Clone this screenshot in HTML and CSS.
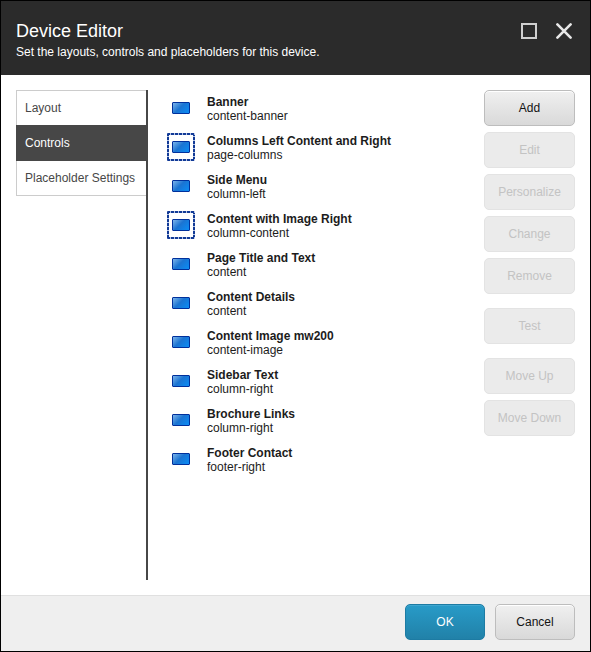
FILE: index.html
```html
<!DOCTYPE html>
<html lang="en">
<head>
<meta charset="utf-8">
<title>Device Editor</title>
<link rel="stylesheet" href="styles.css">
</head>
<body>
<main class="dialog">
  <header class="header">
    <div class="heading">
      <h1 class="title">Device Editor</h1>
      <p class="subtitle">Set the layouts, controls and placeholders for this device.</p>
    </div>
    <div class="window-actions">
      <button class="window-button" type="button" aria-label="Maximize">
        <svg width="16" height="16" viewBox="0 0 16 16"><rect x="1" y="1" width="14" height="14" fill="none" stroke="#d0d0d0" stroke-width="2"/></svg>
      </button>
      <button class="window-button" type="button" aria-label="Close">
        <svg width="16" height="16" viewBox="0 0 16 16"><path d="M1.4 1.4 14.6 14.6M14.6 1.4 1.4 14.6" fill="none" stroke="#e8e8e8" stroke-width="2.6" stroke-linecap="round"/></svg>
      </button>
    </div>
  </header>

  <div class="content">
    <nav class="tabs">
      <a class="tab" href="#layout">Layout</a>
      <a class="tab tab-active" href="#controls" aria-current="page">Controls</a>
      <a class="tab" href="#placeholders">Placeholder Settings</a>
    </nav>

    <ul class="controls">
      <li class="control"><span class="frame"><span class="icon"></span></span><div><strong>Banner</strong><p>content-banner</p></div></li>
      <li class="control"><span class="frame frame-dashed"><span class="icon"></span></span><div><strong>Columns Left Content and Right</strong><p>page-columns</p></div></li>
      <li class="control"><span class="frame"><span class="icon"></span></span><div><strong>Side Menu</strong><p>column-left</p></div></li>
      <li class="control"><span class="frame frame-dashed"><span class="icon"></span></span><div><strong>Content with Image Right</strong><p>column-content</p></div></li>
      <li class="control"><span class="frame"><span class="icon"></span></span><div><strong>Page Title and Text</strong><p>content</p></div></li>
      <li class="control"><span class="frame"><span class="icon"></span></span><div><strong>Content Details</strong><p>content</p></div></li>
      <li class="control"><span class="frame"><span class="icon"></span></span><div><strong>Content Image mw200</strong><p>content-image</p></div></li>
      <li class="control"><span class="frame"><span class="icon"></span></span><div><strong>Sidebar Text</strong><p>column-right</p></div></li>
      <li class="control"><span class="frame"><span class="icon"></span></span><div><strong>Brochure Links</strong><p>column-right</p></div></li>
      <li class="control"><span class="frame"><span class="icon"></span></span><div><strong>Footer Contact</strong><p>footer-right</p></div></li>
    </ul>

    <div class="actions">
      <div class="action-group">
        <button class="button" type="button">Add</button>
        <button class="button" type="button" disabled>Edit</button>
        <button class="button" type="button" disabled>Personalize</button>
        <button class="button" type="button" disabled>Change</button>
        <button class="button" type="button" disabled>Remove</button>
      </div>
      <div class="action-group">
        <button class="button" type="button" disabled>Test</button>
      </div>
      <div class="action-group">
        <button class="button" type="button" disabled>Move Up</button>
        <button class="button" type="button" disabled>Move Down</button>
      </div>
    </div>
  </div>

  <footer class="footer">
    <button class="button button-primary" type="button">OK</button>
    <button class="button" type="button">Cancel</button>
  </footer>
</main>
</body>
</html>
```
FILE: styles.css
```css
* {
  box-sizing: border-box;
}

body {
  margin: 0;
  font: 12px/14px Arial, "Liberation Sans", sans-serif;
  color: #1c1c1c;
}

h1,
p,
ul {
  margin: 0;
  padding: 0;
}

.dialog {
  display: flex;
  flex-direction: column;
  min-height: 100vh;
  border: 1px solid #000;
  background: #fff;
}

.header {
  display: flex;
  justify-content: space-between;
  padding: 19px 18px 13px 15px;
  background: #2b2b2b;
  color: #fff;
}

.title {
  font-size: 18px;
  line-height: 22px;
  font-weight: 400;
}

.subtitle {
  line-height: 20px;
}

.window-actions {
  display: flex;
  align-items: flex-start;
  gap: 19px;
  padding-top: 3px;
}

.window-button {
  display: block;
  padding: 0;
  border: 0;
  background: none;
}

.window-button svg {
  display: block;
}

.content {
  display: flex;
  flex: 1;
  padding: 15px;
}

.tabs {
  width: 132px;
  flex: none;
  border-right: 2px solid #474747;
}

.tab {
  display: block;
  padding: 10px 0 10px 8px;
  border: 1px solid #ccc;
  border-width: 1px 0 0 1px;
  color: #474747;
  text-decoration: none;
  white-space: nowrap;
}

.tab:last-child {
  border-bottom-width: 1px;
}

.tab-active {
  padding-bottom: 11px;
  border-color: #474747;
  background: #474747;
  color: #fff;
}

.tab-active + .tab {
  border-top: 0;
}

.controls {
  flex: 1;
  padding: 4px 0 0 19px;
  list-style: none;
}

.control {
  display: flex;
  gap: 12px;
  margin-bottom: 11px;
}

.control div {
  padding-top: 1px;
  margin-bottom: -1px;
}

.control strong {
  display: block;
}

.frame {
  display: flex;
  align-items: center;
  justify-content: center;
  width: 28px;
  height: 28px;
}

/* Tight dashes: 3px on, 1px off, 2px thick on each side */
.frame-dashed {
  --across: repeating-linear-gradient(90deg, #123a96 0 3px, #b4c4e6 3px 4px);
  --down: repeating-linear-gradient(180deg, #123a96 0 3px, #b4c4e6 3px 4px);
  border-radius: 1px;
  background:
    var(--across) top / 100% 2px no-repeat,
    var(--across) bottom / 100% 2px no-repeat,
    var(--down) left / 2px 100% no-repeat,
    var(--down) right / 2px 100% no-repeat;
}

.icon {
  width: 18px;
  height: 12px;
  border: 1px solid #00309c;
  border-radius: 1px;
  background: linear-gradient(135deg, #7db4ea 0%, #1b74d2 45%, #0a8cf5 100%);
}

.actions {
  display: flex;
  flex-direction: column;
  gap: 14px;
  width: 91px;
}

.action-group {
  display: flex;
  flex-direction: column;
  gap: 6px;
}

.button {
  height: 36px;
  padding: 0;
  border: 1px solid #bdbdbd;
  border-radius: 5px;
  background: linear-gradient(#f0f0f0, #d9d9d9);
  box-shadow: inset 0 1px #fff;
  color: #131313;
  font: inherit;
}

.button:disabled {
  border-color: #e3e3e3;
  background: #ebebeb;
  box-shadow: none;
  color: #c3c3c3;
}

.footer {
  display: flex;
  justify-content: flex-end;
  gap: 10px;
  padding: 8px 15px 11px;
  border-top: 1px solid #e0e0e0;
  background: #efefef;
}

.footer .button {
  width: 80px;
}

.footer .button-primary {
  border-color: #1d7ba3;
  background: linear-gradient(#289bc8, #2181a8);
  box-shadow: inset 0 1px #3fa6cf;
  color: #fff;
}
```
